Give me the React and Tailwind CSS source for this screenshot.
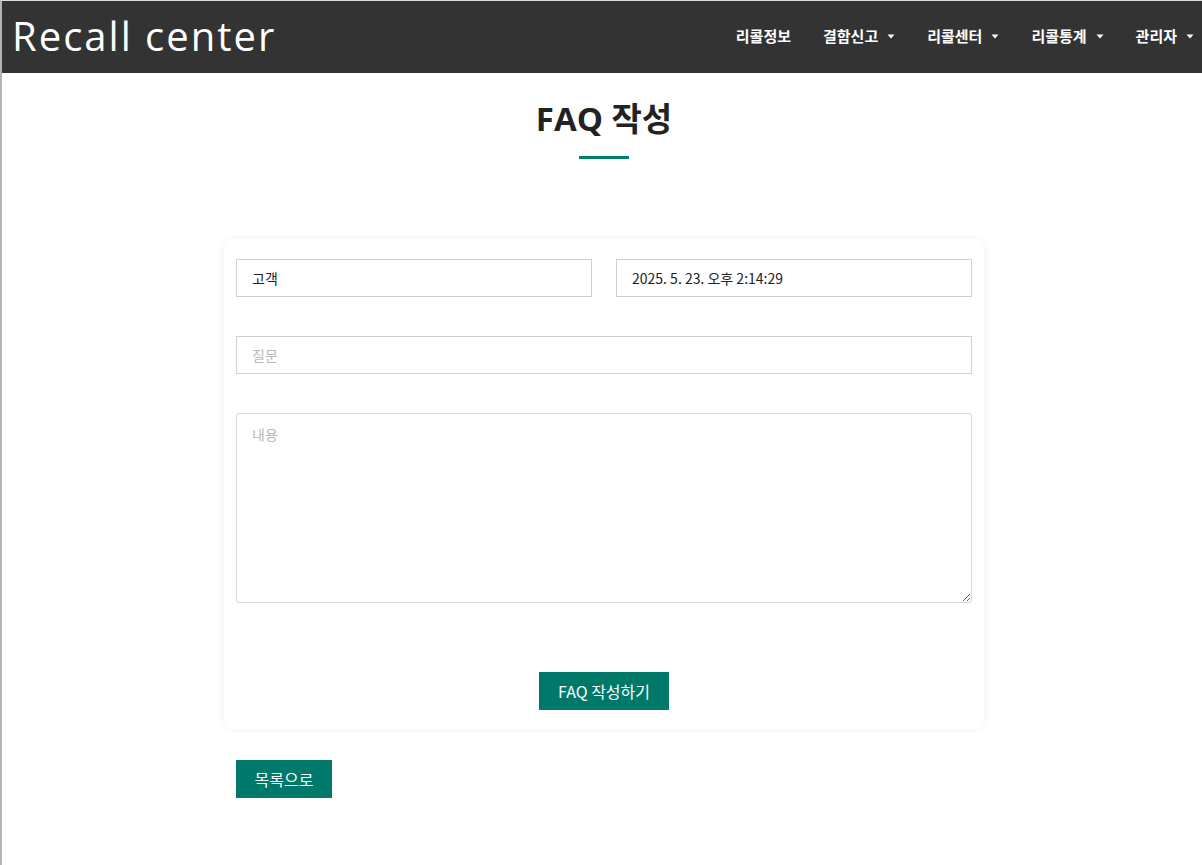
import React, { useState } from 'react';

const NAV = [
  { label: '리콜정보', caret: false },
  { label: '결함신고', caret: true },
  { label: '리콜센터', caret: true },
  { label: '리콜통계', caret: true },
  { label: '관리자', caret: true },
];

const KR = { fontFamily: '"Noto Sans CJK KR", "Noto Sans", sans-serif' };

function Caret() {
  return (
    <svg width="8" height="5" viewBox="0 0 8 5" className="ml-[9px] mt-[1px]">
      <path d="M0.5 0.5h7L4 4.5z" fill="#fff" />
    </svg>
  );
}

export default function App() {
  const [writer, setWriter] = useState('고객');
  const [date] = useState('2025. 5. 23. 오후 2:14:29');
  const [title, setTitle] = useState('');
  const [body, setBody] = useState('');

  return (
    <div className="min-h-[865px] bg-white border-l-2 border-t border-l-[#b4b4b4] border-t-[#dcdcdc]" style={KR}>
      {/* header */}
      <header className="h-[72px] bg-[#333333] flex items-center justify-between pl-[10px] pr-[8px]">
        <div
          className="text-white text-[40px] leading-none tracking-[2px] pb-[2px]"
          style={{ fontFamily: '"Open Sans", sans-serif' }}
        >
          Recall center
        </div>
        <nav className="flex items-center gap-[32px] text-white text-[15px] font-bold pb-[2px]">
          {NAV.map(n => (
            <div key={n.label} className="flex items-center">
              <span>{n.label}</span>
              {n.caret && <Caret />}
            </div>
          ))}
        </nav>
      </header>

      <div className="pl-[4px]">
        {/* title */}
        <div className="flex flex-col items-center pt-[26px]">
          <h1
            className="text-[33px] font-bold text-[#222] leading-[40px]"
            style={{ fontFamily: '"Open Sans", "Noto Sans CJK KR", sans-serif' }}
          >
            FAQ 작성
          </h1>
          <div className="w-[50px] h-[3px] bg-[#00806b] mt-[17px]" />
        </div>

        <div className="w-[760px] mx-auto mt-[80px]">
          <div className="bg-white rounded-[8px] shadow-[0_0_10px_rgba(0,0,0,0.06)] px-[12px] pt-[20px] pb-[19px]">
            <div className="grid grid-cols-2 gap-[24px]">
              <input
                value={writer}
                onChange={e => setWriter(e.target.value)}
                className="h-[38px] border border-[#d0d0d0] px-[15px] text-[14px] text-[#222] outline-none"
              />
              <input
                value={date}
                readOnly
                className="h-[38px] border border-[#d0d0d0] px-[15px] text-[14px] text-[#222] outline-none"
              />
            </div>
            <input
              value={title}
              onChange={e => setTitle(e.target.value)}
              placeholder="질문"
              className="mt-[39px] w-full h-[38px] border border-[#d0d0d0] px-[15px] text-[14px] text-[#222] outline-none placeholder:text-[#b8b8b8]"
            />
            <textarea
              value={body}
              onChange={e => setBody(e.target.value)}
              placeholder="내용"
              className="mt-[39px] block w-full h-[190px] border border-[#d6d6d6] rounded-[3px] px-[15px] py-[10px] text-[14px] text-[#222] outline-none placeholder:text-[#b8b8b8]"
            />
            <div className="flex justify-center mt-[69px]">
              <button className="h-[38px] px-[19px] bg-[#00796b] text-white text-[16px]">FAQ 작성하기</button>
            </div>
          </div>
          <button className="mt-[31px] ml-[12px] h-[38px] w-[96px] bg-[#00796b] text-white text-[16px]">목록으로</button>
        </div>
      </div>
    </div>
  );
}
